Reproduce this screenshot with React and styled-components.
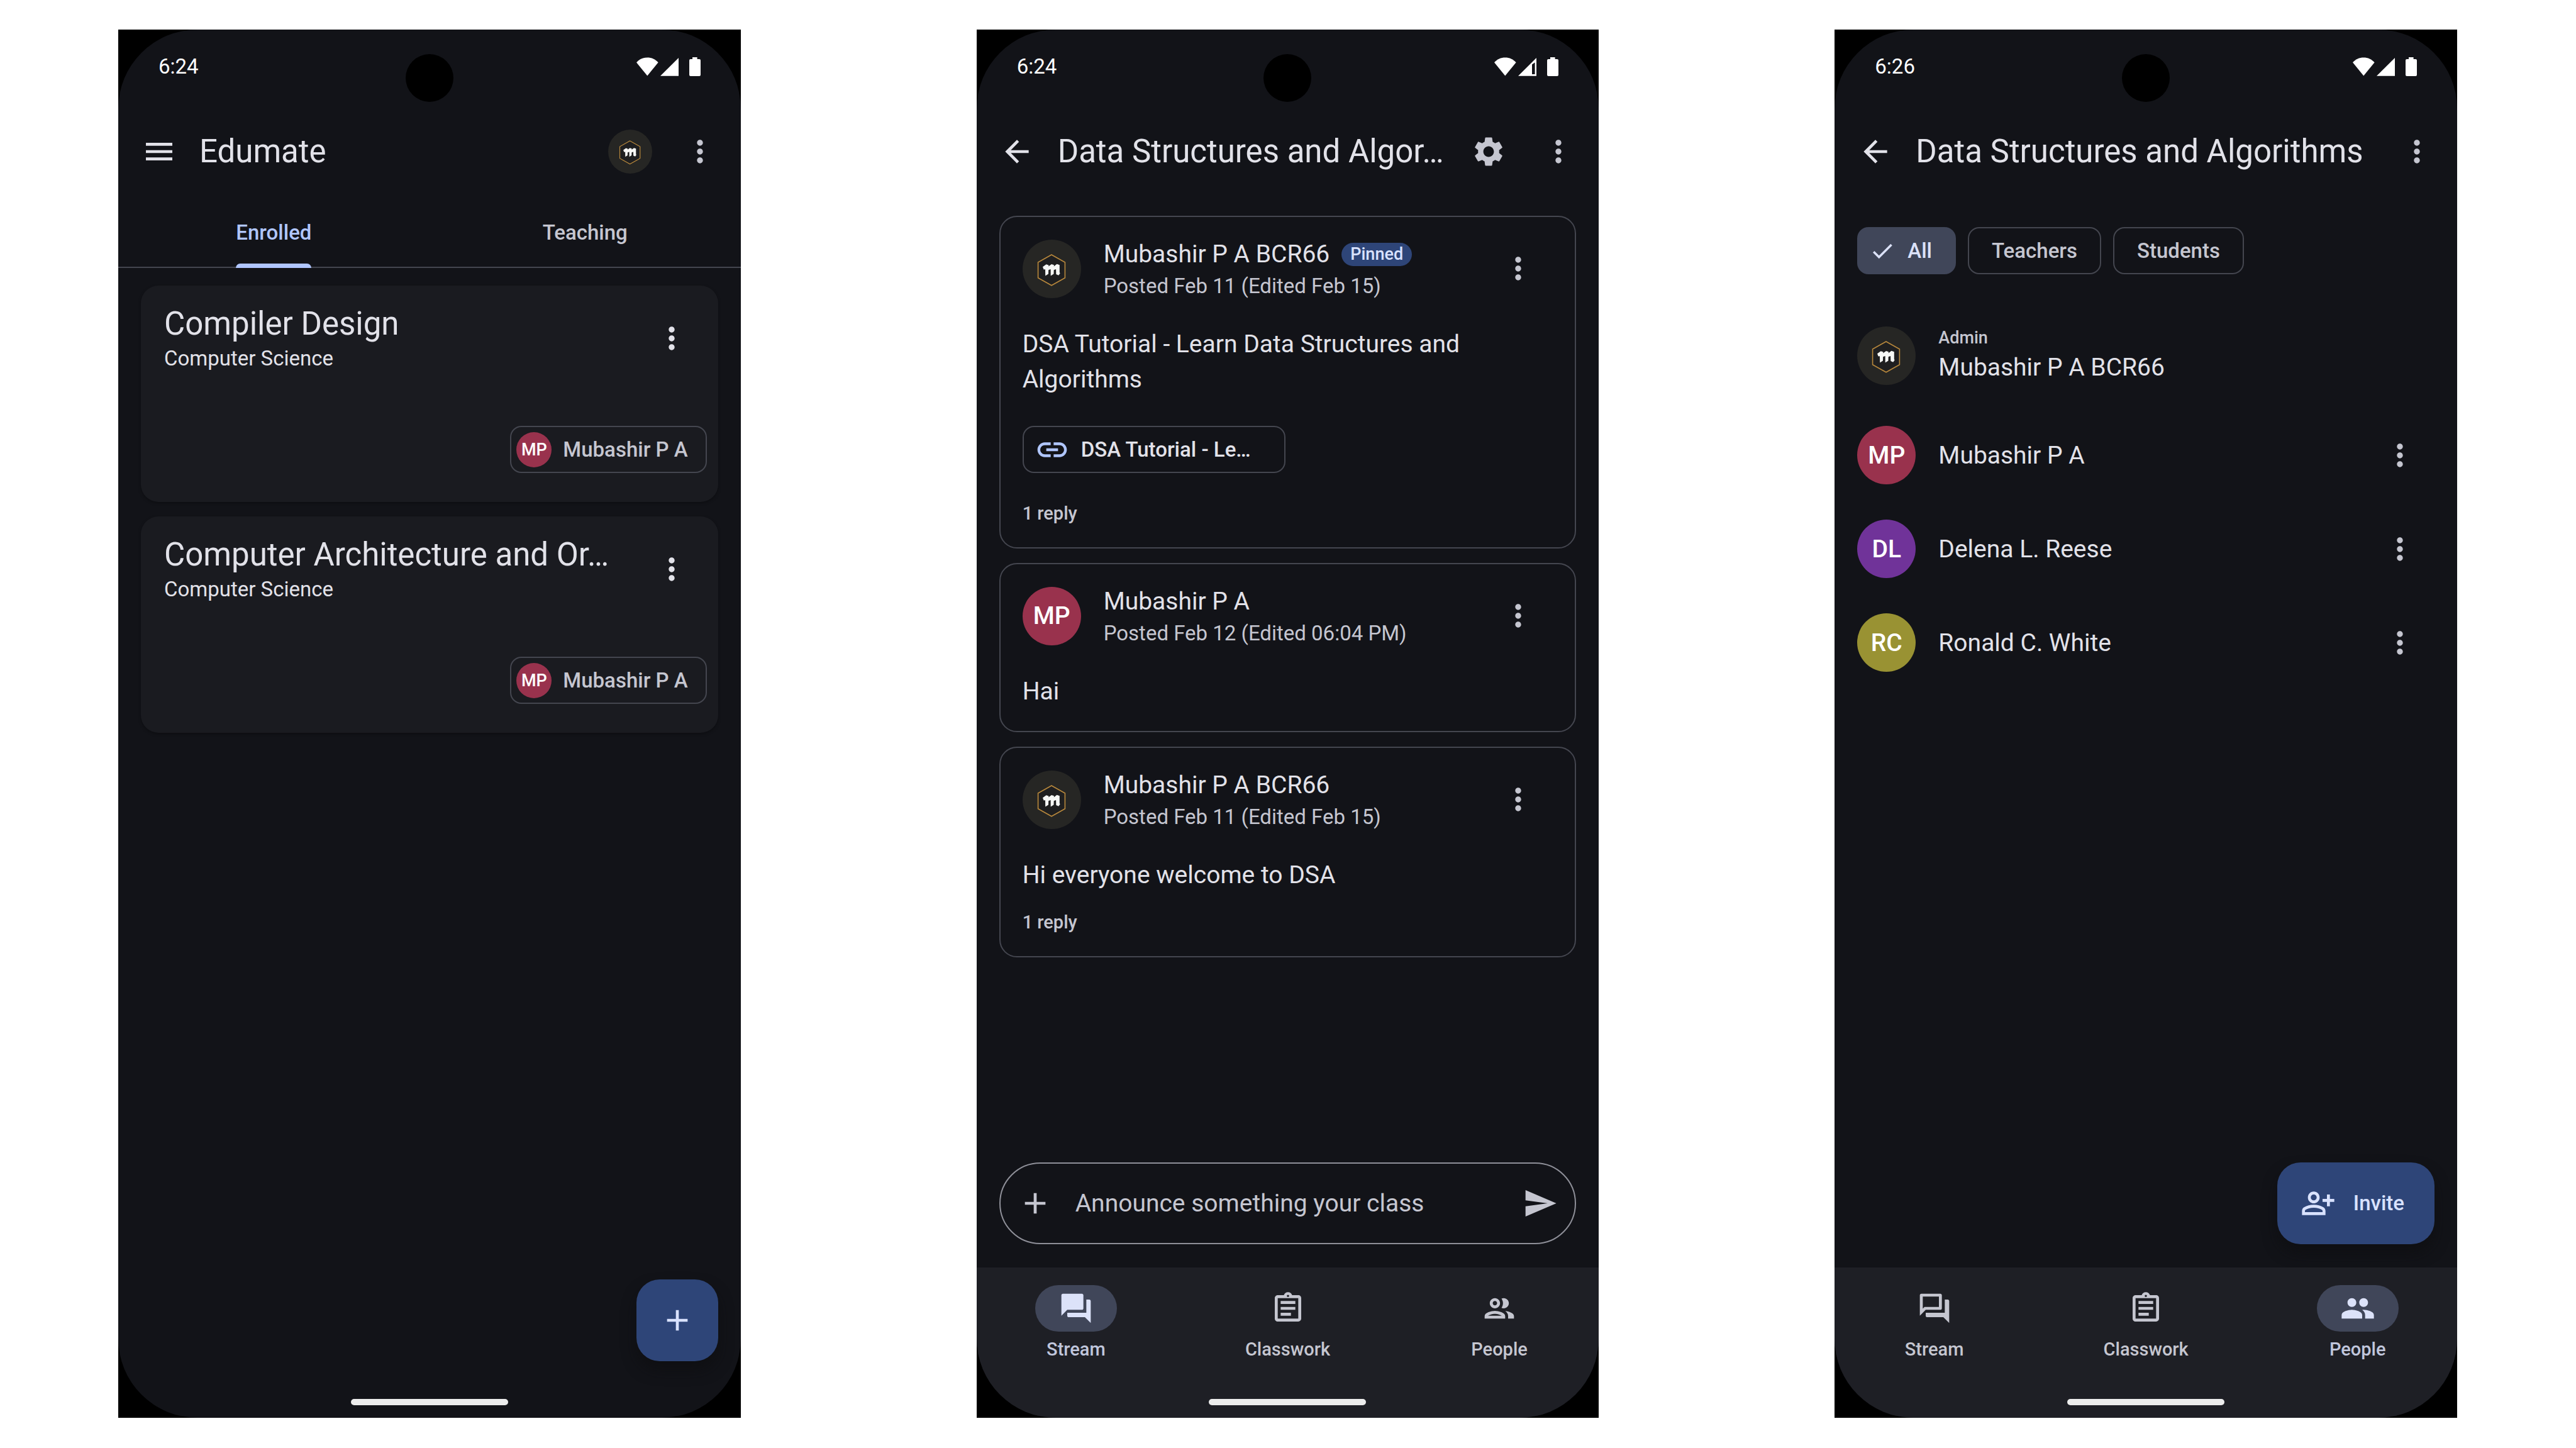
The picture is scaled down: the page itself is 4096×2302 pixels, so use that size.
import React from "react";
import styled, { createGlobalStyle, css } from "styled-components";
import {
  MdAdd,
  MdArrowBack,
  MdCheck,
  MdForum,
  MdLink,
  MdMenu,
  MdMoreVert,
  MdOutlineAssignment,
  MdOutlineForum,
  MdOutlinePeople,
  MdOutlinePersonAddAlt,
  MdPeople,
  MdSend,
  MdSettings,
} from "react-icons/md";

const c = {
  surface: "#121318",
  card: "#1a1b20",
  bar: "#1e1f25",
  outline: "#44464f",
  outlineStrong: "#8f9099",
  text: "#e2e2e9",
  muted: "#c5c6d0",
  accent: "#b0c6ff",
  accentBox: "#2e4578",
  onAccentBox: "#d9e2ff",
  selected: "#404659",
  onSelected: "#dce2f9",
};

const GlobalStyle = createGlobalStyle`
  *, *::before, *::after { box-sizing: border-box; }
  body { margin: 0; background: #ffffff; }
  body, button, input {
    font-family: Roboto, "Liberation Sans", sans-serif;
    -webkit-font-smoothing: antialiased;
  }
  button { border: 0; padding: 0; margin: 0; background: none; color: inherit; cursor: pointer; }
  a { color: inherit; text-decoration: none; }
  h1, h2, p, ul { margin: 0; padding: 0; }
  ul { list-style: none; }
  svg { display: block; flex: none; }
`;

/* ---------- type ---------- */

const titleLarge = css`
  font-size: 51px;
  line-height: 65px;
  font-weight: 400;
`;
const bodyLarge = css`
  font-size: 39px;
  line-height: 56px;
  font-weight: 400;
`;
const bodyMedium = css`
  font-size: 33px;
  line-height: 46px;
  font-weight: 400;
`;
const labelLarge = css`
  font-size: 33px;
  line-height: 46px;
  font-weight: 500;
`;
const labelMedium = css`
  font-size: 29px;
  line-height: 37px;
  font-weight: 500;
`;
const labelSmall = css`
  font-size: 27px;
  line-height: 37px;
  font-weight: 500;
`;
const oneLine = css`
  overflow: hidden;
  text-overflow: ellipsis;
  white-space: nowrap;
`;

/* ---------- device ---------- */

const Gallery = styled.div`
  display: grid;
  grid-template-columns: repeat(3, minmax(0, 1fr));
  column-gap: 375px;
  min-height: 100vh;
  padding: 47px 189px 48px 188px;
`;

const Device = styled.section`
  display: flex;
  background: #000000;
`;

const Screen = styled.div`
  position: relative;
  flex: 1;
  min-width: 0;
  display: flex;
  flex-direction: column;
  overflow: hidden;
  border-radius: 126px;
  background: ${c.surface};
  color: ${c.text};
`;

const Cutout = styled.span`
  position: absolute;
  top: 39px;
  left: calc(50% - 38px);
  width: 76px;
  height: 76px;
  border-radius: 50%;
  background: #000000;
`;

const GestureBar = styled.span`
  position: absolute;
  bottom: 20px;
  left: calc(50% - 125px);
  width: 250px;
  height: 10px;
  border-radius: 5px;
  background: #ececec;
`;

const StatusBar = styled.div`
  display: flex;
  align-items: center;
  justify-content: space-between;
  height: 119px;
  padding: 0 64px 2px;
  color: #ffffff;
`;

const Clock = styled.time`
  font-size: 33px;
  line-height: 46px;
`;

const AppBar = styled.header`
  display: flex;
  align-items: center;
  height: 149px;
  padding: 0 9px;
`;

const IconButton = styled.button`
  flex: none;
  display: flex;
  align-items: center;
  justify-content: center;
  width: 111px;
  height: 111px;
  font-size: 56px;
  color: ${(p) => (p.$strong ? c.text : c.muted)};
`;

const BarTitle = styled.h1`
  ${titleLarge}
  ${oneLine}
  flex: 1;
  padding-left: 9px;
`;

/* ---------- avatars ---------- */

const Circle = styled.span`
  flex: none;
  display: flex;
  align-items: center;
  justify-content: center;
  width: ${(p) => p.$size}px;
  height: ${(p) => p.$size}px;
  border-radius: 50%;
  background: ${(p) => p.$tone};
  color: #ffffff;
  font-size: ${(p) => (p.$size > 60 ? 39 : 27)}px;
  line-height: 46px;
  font-weight: 500;
`;

const tones = { MP: "#99324d", DL: "#703399", RC: "#999233" };

function Initials({ of, size = 93 }) {
  return (
    <Circle $size={size} $tone={tones[of]}>
      {of}
    </Circle>
  );
}

function Emblem({ size = 93 }) {
  return (
    <svg width={size} height={size} viewBox="0 0 93 93" aria-hidden="true">
      <circle cx="46.5" cy="46.5" r="46.5" fill="#262624" />
      <path
        d="M46 24L67.4 36V60.8L46 72.8L24.600 60.800V36Z"
        fill="#1f1f20"
        stroke="#b8883c"
        strokeWidth="1.6"
      />
      <g fill="#f7f8f6">
        <path d="M32 43.200L37.600 39.200L41.400 40.400L41 54.600L36.200 57.600L36 47.200L33.600 47.600Z" />
        <path d="M40.200 43.200L46 39L49.900 40.300L49.500 54.600L44.700 57.600L44.600 47L40.200 48.600Z" />
        <path d="M48.700 43.200L54.500 38.800L58.800 40.200L58.800 52L59.600 53.400L57.200 56.800L53.300 55L53.100 47L48.700 48.600Z" />
      </g>
    </svg>
  );
}

/* ---------- shared pieces ---------- */

const StatusIcons = styled.svg.attrs({
  width: 102,
  height: 30,
  viewBox: "0 0 102 30",
  "aria-hidden": true,
})`
  fill: #ffffff;
`;

function Status({ time, weak }) {
  return (
    <StatusBar>
      <Clock>{time}</Clock>
      <StatusIcons>
        <path d="M0 8.300C4.500 3 10.500 0.400 17.300 0.400S30 3 34.600 8.300L17.300 29.600Z" />
        {weak ? (
          <path
            fillRule="evenodd"
            d="M67 1V29.800H38ZM60 11.600V27H64.600V8.200Z"
          />
        ) : (
          <path d="M67 1V29.800H38Z" />
        )}
        <path d="M89 0h7.600v3h3.400a2 2 0 0 1 2 2v23a2 2 0 0 1-2 2h-14a2 2 0 0 1-2-2v-23a2 2 0 0 1 2-2h3z" />
      </StatusIcons>
    </StatusBar>
  );
}

function More({ strong, label = "More options" }) {
  return (
    <IconButton type="button" aria-label={label} $strong={strong}>
      <MdMoreVert />
    </IconButton>
  );
}

function Phone({ time, weak, children }) {
  return (
    <Device>
      <Screen>
        <Status time={time} weak={weak} />
        <Cutout />
        {children}
        <GestureBar />
      </Screen>
    </Device>
  );
}

const Fab = styled.button`
  ${labelLarge}
  align-self: flex-end;
  display: flex;
  align-items: center;
  justify-content: center;
  gap: 28px;
  min-width: 130px;
  height: 130px;
  margin-top: auto;
  padding: ${(p) => (p.$extended ? "0 48px 0 37px" : 0)};
  border-radius: 37px;
  background: ${c.accentBox};
  color: ${c.onAccentBox};
  box-shadow: 0 14px 22px rgba(12, 12, 14, 0.55);

  svg {
    width: 56px;
    height: 56px;
  }
`;

/* ---------- bottom navigation ---------- */

const Nav = styled.nav`
  display: flex;
  gap: 20px;
  padding: 28px 0 90px;
  background: ${c.bar};
`;

const NavItem = styled.a`
  ${labelMedium}
  flex: 1;
  display: flex;
  flex-direction: column;
  align-items: center;
  gap: 10px;
  color: ${(p) => (p.$active ? "#c0c6dc" : c.muted)};
`;

const NavPill = styled.span`
  display: flex;
  align-items: center;
  justify-content: center;
  width: 130px;
  height: 74px;
  border-radius: 37px;
  font-size: 56px;
  background: ${(p) => (p.$active ? c.selected : "transparent")};
  color: ${(p) => (p.$active ? c.onSelected : c.muted)};
`;

const destinations = [
  { name: "Stream", on: MdForum, off: MdOutlineForum },
  { name: "Classwork", on: MdOutlineAssignment, off: MdOutlineAssignment },
  { name: "People", on: MdPeople, off: MdOutlinePeople },
];

function BottomNav({ current }) {
  return (
    <Nav aria-label="Class sections">
      {destinations.map(({ name, on, off }) => {
        const active = name === current;
        const Icon = active ? on : off;
        return (
          <NavItem
            key={name}
            href={`#${name.toLowerCase()}`}
            $active={active}
            aria-current={active ? "page" : undefined}
          >
            <NavPill $active={active}>
              <Icon />
            </NavPill>
            {name}
          </NavItem>
        );
      })}
    </Nav>
  );
}

/* ---------- courses screen ---------- */

const Tabs = styled.div`
  display: flex;
  height: 111px;
  box-shadow: inset 0 -2px ${c.outline};
`;

const Tab = styled.button`
  ${labelLarge}
  flex: 1;
  display: flex;
  justify-content: center;
  color: ${(p) => (p.$active ? c.accent : c.muted)};
`;

const TabLabel = styled.span`
  display: flex;
  flex-direction: column;
  justify-content: space-between;
  height: 111px;
  padding-top: 32px;

  &::after {
    content: "";
    height: 7px;
    border-radius: 7px 7px 0 0;
    background: ${(p) => (p.$active ? c.accent : "transparent")};
  }
`;

const Courses = styled.main`
  flex: 1;
  display: flex;
  flex-direction: column;
  padding: 28px 36px 90px;
`;

const CourseList = styled.ul`
  display: grid;
  gap: 23px;
`;

const Course = styled.li`
  display: flex;
  flex-direction: column;
  justify-content: space-between;
  align-items: flex-end;
  min-height: 344px;
  padding: 28px 18px 46px 37px;
  border-radius: 28px;
  background: ${c.card};
  box-shadow: 0 2px 5px rgba(0, 0, 0, 0.3);
`;

const CourseHead = styled.div`
  align-self: stretch;
  display: flex;
  align-items: center;
  justify-content: space-between;
`;

const CourseText = styled.div`
  min-width: 0;
`;

const CourseName = styled.h2`
  ${titleLarge}
  ${oneLine}
`;

const CourseSubject = styled.p`
  ${bodyMedium}
`;

const TeacherChip = styled.button`
  ${labelLarge}
  display: flex;
  align-items: center;
  gap: 18px;
  height: 75px;
  padding: 0 28px 0 8px;
  border: 2px solid ${c.outline};
  border-radius: 18px;
  color: ${c.muted};
`;

const courses = ["Compiler Design", "Computer Architecture and Or…"];

function CoursesScreen() {
  return (
    <Phone time="6:24">
      <AppBar>
        <IconButton type="button" aria-label="Open menu" $strong>
          <MdMenu />
        </IconButton>
        <BarTitle>Edumate</BarTitle>
        <IconButton type="button" aria-label="Account">
          <Emblem size={70} />
        </IconButton>
        <More />
      </AppBar>
      <Tabs role="tablist">
        <Tab type="button" role="tab" aria-selected="true" $active>
          <TabLabel $active>Enrolled</TabLabel>
        </Tab>
        <Tab type="button" role="tab" aria-selected="false">
          <TabLabel>Teaching</TabLabel>
        </Tab>
      </Tabs>
      <Courses>
        <CourseList>
          {courses.map((name) => (
            <Course key={name}>
              <CourseHead>
                <CourseText>
                  <CourseName>{name}</CourseName>
                  <CourseSubject>Computer Science</CourseSubject>
                </CourseText>
                <More strong label="Course options" />
              </CourseHead>
              <TeacherChip type="button">
                <Initials of="MP" size={56} />
                Mubashir P A
              </TeacherChip>
            </Course>
          ))}
        </CourseList>
        <Fab type="button" aria-label="Add course">
          <MdAdd />
        </Fab>
      </Courses>
    </Phone>
  );
}

/* ---------- stream screen ---------- */

const Stream = styled.main`
  flex: 1;
  display: flex;
  flex-direction: column;
  gap: 23px;
  padding: 28px 36px 37px;
`;

const Post = styled.article`
  display: flex;
  flex-direction: column;
  align-items: flex-start;
  padding: 31px 35px 35px;
  border: 2px solid ${c.outline};
  border-radius: 28px;
`;

const PostHead = styled.header`
  align-self: stretch;
  display: flex;
  align-items: center;
  gap: 36px;
  height: 102px;
  margin-bottom: 41px;
`;

const PostMeta = styled.div`
  flex: 1;
  min-width: 0;
`;

const PostAuthor = styled.div`
  display: flex;
  align-items: center;
  gap: 19px;
`;

const PersonName = styled.h2`
  ${bodyLarge}
`;

const Pinned = styled.span`
  ${labelSmall}
  padding: 0 14px;
  border-radius: 19px;
  background: ${c.accentBox};
  color: ${c.onAccentBox};
`;

const PostDate = styled.p`
  ${bodyMedium}
  color: ${c.muted};
`;

const PostBody = styled.p`
  ${bodyLarge}
`;

const Attachment = styled.a`
  ${labelLarge}
  display: flex;
  align-items: center;
  gap: 18px;
  width: 418px;
  height: 75px;
  margin: 46px 0 17px;
  padding: 0 17px;
  border: 2px solid ${c.outline};
  border-radius: 18px;

  svg {
    width: 56px;
    height: 56px;
    color: ${c.accent};
  }
`;

const Replies = styled.button`
  ${labelMedium}
  margin-top: 29px;
  color: ${c.muted};
`;

const Composer = styled.form`
  display: flex;
  align-items: center;
  height: 130px;
  margin-top: auto;
  border: 2px solid ${c.outlineStrong};
  border-radius: 65px;
`;

const ComposerInput = styled.input`
  ${bodyLarge}
  flex: 1;
  min-width: 0;
  padding: 0 8px;
  border: 0;
  outline: 0;
  background: none;
  color: ${c.text};

  &::placeholder {
    color: ${c.muted};
    opacity: 1;
  }
`;

const posts = [
  {
    author: "Mubashir P A BCR66",
    pinned: true,
    date: "Posted Feb 11 (Edited Feb 15)",
    body: "DSA Tutorial - Learn Data Structures and Algorithms",
    link: "DSA Tutorial - Le…",
    replies: "1 reply",
  },
  {
    author: "Mubashir P A",
    initials: "MP",
    date: "Posted Feb 12 (Edited 06:04 PM)",
    body: "Hai",
  },
  {
    author: "Mubashir P A BCR66",
    date: "Posted Feb 11 (Edited Feb 15)",
    body: "Hi everyone welcome to DSA",
    replies: "1 reply",
  },
];

function StreamScreen() {
  return (
    <Phone time="6:24" weak>
      <AppBar>
        <IconButton type="button" aria-label="Back" $strong>
          <MdArrowBack />
        </IconButton>
        <BarTitle>Data Structures and Algor…</BarTitle>
        <IconButton type="button" aria-label="Class settings">
          <MdSettings />
        </IconButton>
        <More />
      </AppBar>
      <Stream>
        {posts.map((post) => (
          <Post key={post.body}>
            <PostHead>
              {post.initials ? <Initials of={post.initials} /> : <Emblem />}
              <PostMeta>
                <PostAuthor>
                  <PersonName>{post.author}</PersonName>
                  {post.pinned && <Pinned>Pinned</Pinned>}
                </PostAuthor>
                <PostDate>{post.date}</PostDate>
              </PostMeta>
              <More label="Post options" />
            </PostHead>
            <PostBody>{post.body}</PostBody>
            {post.link && (
              <Attachment href="#attachment">
                <MdLink />
                {post.link}
              </Attachment>
            )}
            {post.replies && <Replies type="button">{post.replies}</Replies>}
          </Post>
        ))}
        <Composer onSubmit={(e) => e.preventDefault()}>
          <IconButton type="button" aria-label="Attach">
            <MdAdd />
          </IconButton>
          <ComposerInput
            type="text"
            aria-label="Announcement"
            placeholder="Announce something your class"
          />
          <IconButton type="submit" aria-label="Send">
            <MdSend />
          </IconButton>
        </Composer>
      </Stream>
      <BottomNav current="Stream" />
    </Phone>
  );
}

/* ---------- people screen ---------- */

const People = styled.main`
  flex: 1;
  display: flex;
  flex-direction: column;
  padding: 46px 36px 37px;
`;

const Filters = styled.div`
  display: flex;
  gap: 19px;
  margin-bottom: 46px;
`;

const FilterChip = styled.button`
  ${labelLarge}
  display: flex;
  align-items: center;
  gap: 19px;
  height: 75px;
  padding: ${(p) => (p.$active ? "0 38px 0 19px" : "0 36px")};
  border: ${(p) => (p.$active ? 0 : `2px solid ${c.outline}`)};
  border-radius: 18px;
  background: ${(p) => (p.$active ? c.selected : "transparent")};
  color: ${(p) => (p.$active ? c.onSelected : c.muted)};
`;

const Person = styled.li`
  display: flex;
  align-items: center;
  gap: 36px;
  min-height: ${(p) => (p.$tall ? 167 : 149)}px;
`;

const PersonText = styled.div`
  flex: 1;
`;

const Role = styled.p`
  ${labelSmall}
  color: ${c.muted};
`;

const people = [
  { name: "Mubashir P A BCR66", role: "Admin" },
  { name: "Mubashir P A", initials: "MP" },
  { name: "Delena L. Reese", initials: "DL" },
  { name: "Ronald C. White", initials: "RC" },
];

function PeopleScreen() {
  return (
    <Phone time="6:26">
      <AppBar>
        <IconButton type="button" aria-label="Back" $strong>
          <MdArrowBack />
        </IconButton>
        <BarTitle>Data Structures and Algorithms</BarTitle>
        <More />
      </AppBar>
      <People>
        <Filters>
          <FilterChip type="button" aria-pressed="true" $active>
            <MdCheck size={42} />
            All
          </FilterChip>
          <FilterChip type="button" aria-pressed="false">
            Teachers
          </FilterChip>
          <FilterChip type="button" aria-pressed="false">
            Students
          </FilterChip>
        </Filters>
        <ul>
          {people.map(({ name, role, initials }) => (
            <Person key={name} $tall={Boolean(role)}>
              {initials ? <Initials of={initials} /> : <Emblem />}
              <PersonText>
                {role && <Role>{role}</Role>}
                <PersonName>{name}</PersonName>
              </PersonText>
              {!role && <More label={`Options for ${name}`} />}
            </Person>
          ))}
        </ul>
        <Fab type="button" $extended>
          <MdOutlinePersonAddAlt />
          Invite
        </Fab>
      </People>
      <BottomNav current="People" />
    </Phone>
  );
}

export default function App() {
  return (
    <>
      <GlobalStyle />
      <Gallery>
        <CoursesScreen />
        <StreamScreen />
        <PeopleScreen />
      </Gallery>
    </>
  );
}
